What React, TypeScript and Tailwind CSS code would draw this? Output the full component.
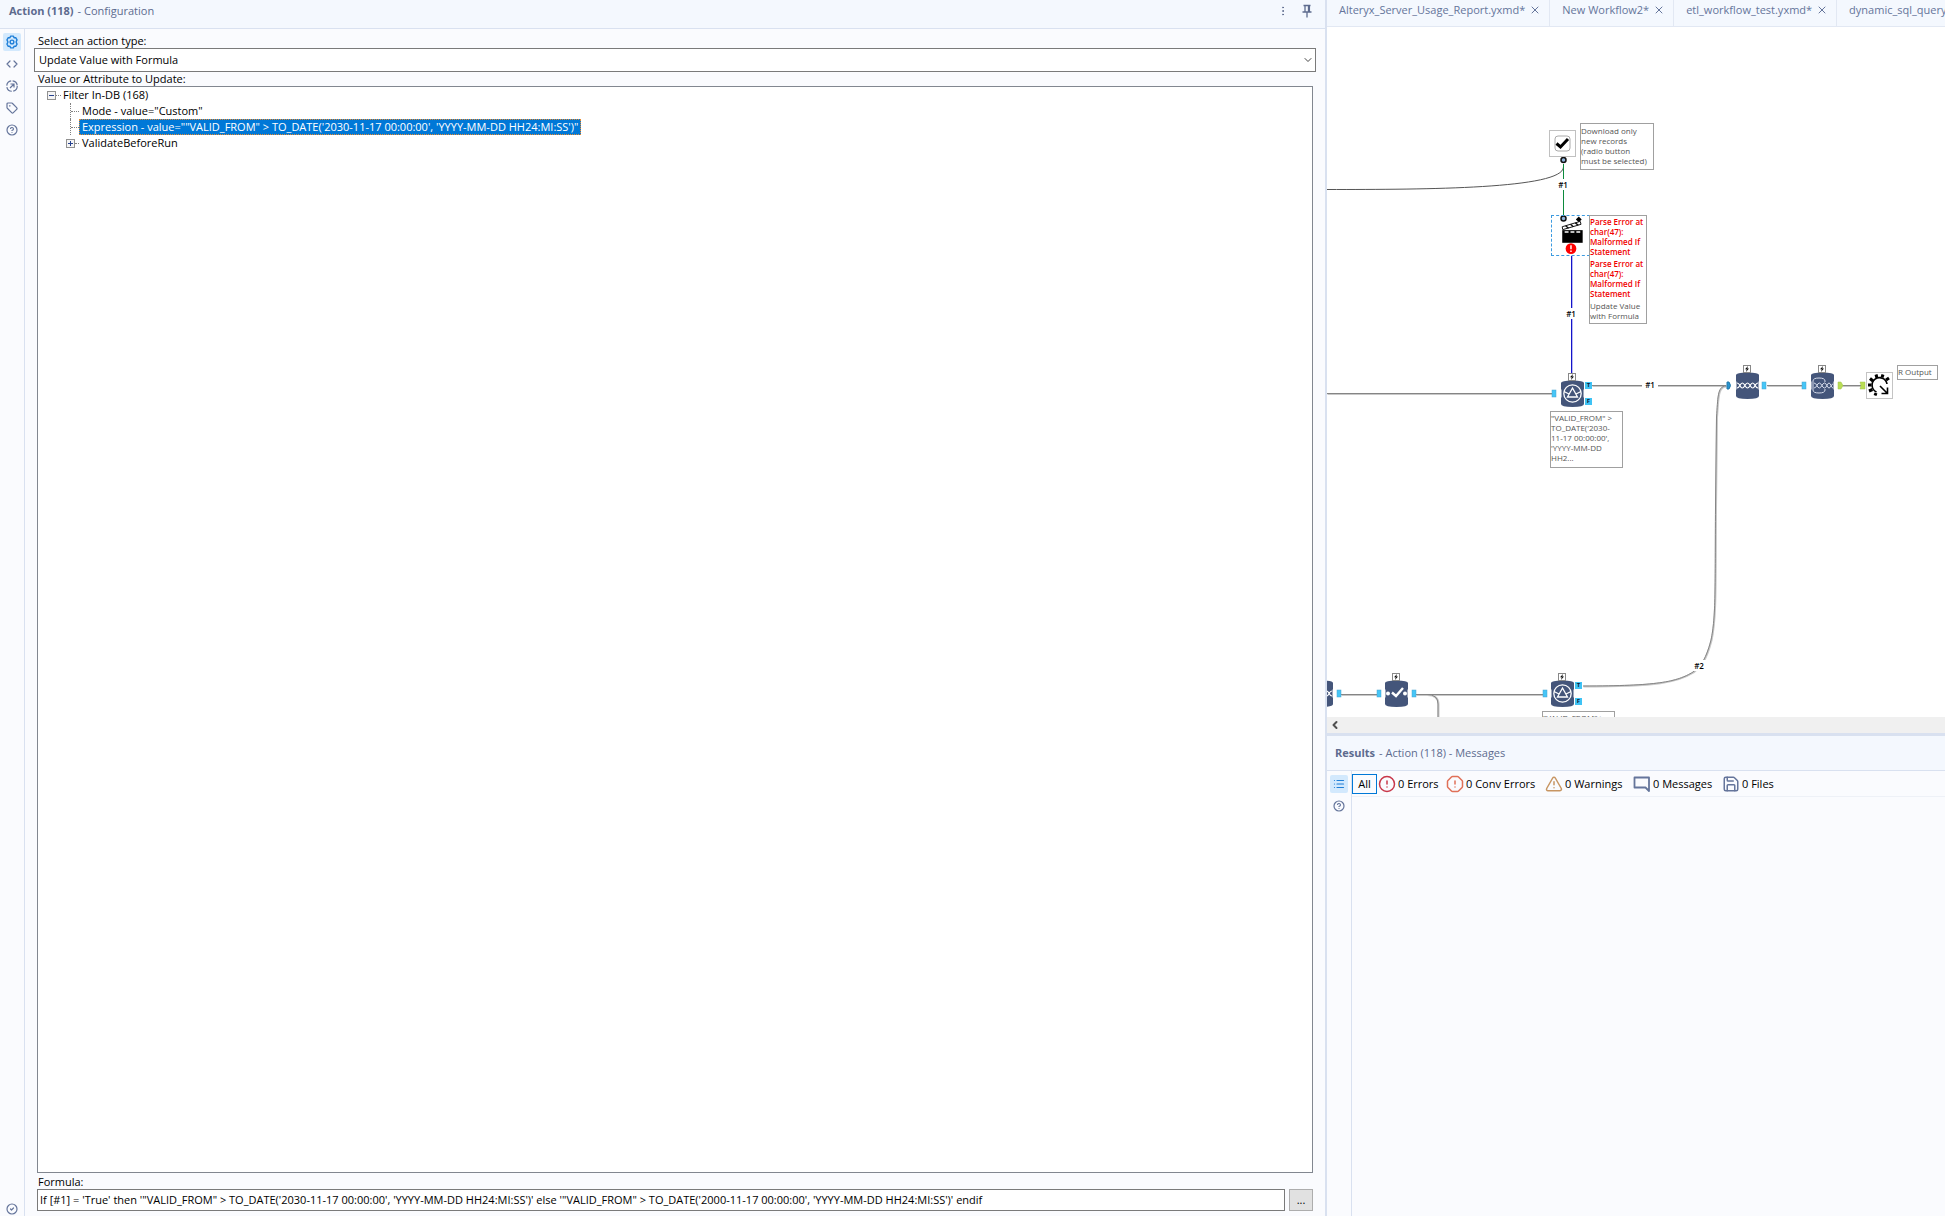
import React from "react";
import { Code, Tag, CircleHelp, CircleCheck, EllipsisVertical, X, List, ChevronDown, ChevronLeft, TriangleAlert, OctagonAlert, CircleAlert, Save } from "lucide-react";

const tabs = ["Alteryx_Server_Usage_Report.yxmd*", "New Workflow2*", "etl_workflow_test.yxmd*", "dynamic_sql_query"];

type Glyph = "filter" | "join" | "stream" | "select";

const dbTools: { x: number; y: number; glyph: Glyph; label: string }[] = [
  { x: 234, y: 346, glyph: "filter", label: "Filter In-DB" },
  { x: 409, y: 338, glyph: "join", label: "Union In-DB" },
  { x: 484, y: 338, glyph: "stream", label: "Data Stream Out" },
  { x: -17, y: 646, glyph: "join", label: "Connect In-DB" },
  { x: 58, y: 646, glyph: "select", label: "Select In-DB" },
  { x: 224, y: 646, glyph: "filter", label: "Filter In-DB" },
];

const blueAnchors = [
  [225, 363],
  [435, 355],
  [475, 355],
  [10, 663],
  [50, 663],
  [85, 663],
  [216, 663],
];

const branchAnchors = [
  { x: 258, y: 355, text: "T" },
  { x: 258, y: 371, text: "F" },
  { x: 248, y: 655, text: "T" },
  { x: 248, y: 671, text: "F" },
];

const wireLabels = [
  { x: 228, y: 152, text: "#1" },
  { x: 236, y: 281, text: "#1" },
  { x: 315, y: 352, text: "#1" },
  { x: 364, y: 633, text: "#2" },
];

const GearIcon: React.FC = () => (
  <svg viewBox="0 0 24 24" className="w-3.5 h-3.5" fill="none" stroke="currentColor" strokeWidth="2.4" strokeLinejoin="round" aria-hidden="true">
    <path d="M9.500 2h5l1 2.600 2.900-.1 2.200 3.900-1.600 3.600 1.600 3.600-2.200 3.900-2.900-.1-1 2.600h-5l-1-2.600-2.900.1-2.200-3.900L5 12 3.400 8.400l2.200-3.900 2.900.1z" />
    <circle cx="12" cy="12" r="3.200" />
  </svg>
);

const CircleArrowIcon: React.FC = () => (
  <svg viewBox="0 0 24 24" className="w-3 h-3" fill="none" stroke="currentColor" strokeWidth="2.4" aria-hidden="true">
    <circle cx="12" cy="12" r="10.500" strokeDasharray="13.500 3" />
    <path d="M8 16l7.500-7.500M9 8h7v7" />
  </svg>
);

const PinIcon: React.FC = () => (
  <svg viewBox="0 0 12 14" className="w-3 h-3.5" fill="none" stroke="currentColor" strokeWidth="1.300" aria-hidden="true">
    <path d="M2.500 1.500h7M4 1.500v6M7.500 1.500v6M8.400 1.500v6M1.500 8h9M6 8v5.500" />
  </svg>
);

const MessageIcon: React.FC = () => (
  <svg viewBox="0 0 18 18" className="w-[18px] h-[18px]" fill="none" stroke="currentColor" strokeWidth="1.800" strokeLinejoin="round" aria-hidden="true">
    <path d="M1.500 2.500h14.500v13.500l-3.500-3.500h-11z" />
  </svg>
);

const filters = [
  { label: "0 Errors", icon: <CircleAlert className="w-[18px] h-[18px] text-[#c8374a]" />, width: "w-[68px]" },
  { label: "0 Conv Errors", icon: <OctagonAlert className="w-[18px] h-[18px] text-[#e07058]" />, width: "w-[99px]" },
  { label: "0 Warnings", icon: <TriangleAlert className="w-[18px] h-[18px] text-[#c79562]" />, width: "w-[88px]" },
  { label: "0 Messages", icon: <MessageIcon />, width: "w-[89px]" },
  { label: "0 Files", icon: <Save className="w-[18px] h-[18px]" />, width: "w-[70px]" },
];

const TreeToggle: React.FC<{ open: boolean; label: string }> = ({ open, label }) => (
  <button type="button" aria-label={label} aria-expanded={open} className="w-[9px] h-[9px] shrink-0 border border-[#919191] bg-[#f4f4f4] text-[#26418f]">
    <svg viewBox="0 0 7 7" className="block w-[7px] h-[7px]" stroke="currentColor" aria-hidden="true">
      <path d={open ? "M1 3.500h5" : "M1 3.500h5M3.500 1v5"} />
    </svg>
  </button>
);

const DbTool: React.FC<{ glyph: Glyph }> = ({ glyph }) => (
  <svg viewBox="0 0 23 34" className="w-[23px] h-[34px]" fill="none" aria-hidden="true">
    <path d="M0 10Q0 7.500 11.500 7.500T23 10V16L22.500 17V24L23 25V31Q23 34 11.500 34T0 31V25L0.500 24V17L0 16Z" fill="#44557a" />
    <rect x="7.500" y="0.500" width="7" height="7" fill="#fff" stroke="#888" />
    <path d="M12 1L9 4.300h1.700L10 7l3-3.500h-1.700z" fill="#111" />
    {glyph === "filter" && (
      <g stroke="#fff" strokeWidth="1.300">
        <circle cx="11.500" cy="20.500" r="8.700" />
        <path d="M11.500 15L6.500 24h10zM3 18.500l5 2.500M15 21l5-2.500" />
      </g>
    )}
    {glyph === "join" && (
      <path
        d="M1 18C4 18 4 23 6.300 23S9.200 18 11.500 18 14.400 23 16.700 23 19 18 22 18M1 23C4 23 4 18 6.300 18S9.200 23 11.500 23 14.400 18 16.700 18 19 23 22 23"
        stroke="#fff"
        strokeWidth="1.200"
      />
    )}
    {glyph === "stream" && (
      <g stroke="#d5dbea" strokeWidth="1">
        <path d="M2 16q0-3 6-3t6 3v1M2 16v9q0 3 6 3t6-3v-1" />
        <path d="M3 18C6 18 6 23 8.300 23S11.200 18 13.500 18 16 23 18 23 20 19 22 19M3 23C6 23 6 18 8.300 18S11.200 23 13.500 23 16 18 18 18 20 23 22 23" />
      </g>
    )}
    {glyph === "select" && (
      <g>
        <circle cx="3" cy="20.500" r="2" fill="#fff" />
        <circle cx="20" cy="20.500" r="2" fill="#fff" />
        <path d="M7 19.500l4 3.500 7-8" stroke="#fff" strokeWidth="2.400" />
      </g>
    )}
  </svg>
);

const straightWires = "M0 366.500H225M265 358.500H399M440 358.500H476M515 358.500H534M14 667.500H50M89 667.500H216";
const unionWire = "M399 359C390 359 391 372 389.500 390L388.500 480C388 560 389 590 384 613C378 636 372 640 366 645C350 655 330 659 256 659";
const downWire = "M100 667.500Q111 667.500 111 677V690";

const Wires: React.FC = () => (
  <svg className="absolute left-0 top-0 w-[620px] h-[690px]" fill="none" aria-hidden="true">
    <path d="M0 162.500C100 162.500 236 162 236.500 140" stroke="#555" />
    <path d="M236.500 137V188" stroke="#0c8a3c" />
    <path d="M245.500 229V346" stroke="#b9b9f5" />
    <path d="M244.500 229V346" stroke="#1414c8" />
    <g stroke="#c8c8c8" strokeWidth="2" transform="translate(0.5 0.5)">
      <path d={straightWires} />
      <path d={unionWire} />
      <path d={downWire} />
    </g>
    <g stroke="#858585">
      <path d={straightWires} />
      <path d={unionWire} />
      <path d={downWire} />
    </g>
    {/* Connection points */}
    <g fill="#46c6f7" stroke="#4aa3cf" strokeWidth="0.500">
      {blueAnchors.map(([x, y]) => (
        <rect key={`${x}-${y}`} x={x} y={y} width="4" height="7" />
      ))}
    </g>
    <path d="M400 355h2q3 3.500 0 7h-2z" fill="#2795d0" stroke="#2478aa" />
    <path d="M511 355h3l2 3.500-2 3.500h-3zM533 355h5v7h-5l1-3.500z" fill="#b9dd55" stroke="#9cc04a" strokeWidth="0.500" />
    {/* Question anchors */}
    <g stroke="#111" strokeWidth="1.500" fill="#8fb4dc">
      <circle cx="236.500" cy="133" r="2.500" />
      <circle cx="236.500" cy="191.500" r="2.500" />
    </g>
  </svg>
);

const note = "absolute border border-[#a0a0a0] bg-white text-[8px] leading-[10px] text-[#555] whitespace-nowrap";

const WorkflowCanvas: React.FC = () => (
  <main className="relative flex-1 min-h-0 overflow-hidden bg-white" aria-label="Workflow canvas">
    <Wires />

    {wireLabels.map((l) => (
      <span key={`${l.x}-${l.y}`} className="absolute w-4 bg-white text-center text-[8px] leading-[11px] font-semibold text-black" style={{ left: l.x, top: l.y }}>
        {l.text}
      </span>
    ))}

    {branchAnchors.map((a) => (
      <span key={`${a.x}-${a.y}`} className="absolute w-[7px] h-[7px] bg-[#3fc3f5] text-center text-[6px] leading-[7px] font-bold text-[#123]" style={{ left: a.x, top: a.y }}>
        {a.text}
      </span>
    ))}

    {dbTools.map((t) => (
      <div key={`${t.x}-${t.y}`} role="img" aria-label={t.label} className="absolute" style={{ left: t.x, top: t.y }}>
        <DbTool glyph={t.glyph} />
      </div>
    ))}

    {/* Check box tool */}
    <div className="absolute left-[222px] top-[103px]">
      <svg viewBox="0 0 27 27" className="w-[27px] h-[27px]" aria-hidden="true">
        <rect x="0.500" y="0.500" width="26" height="26" fill="#fff" stroke="#c0c0c0" />
        <rect x="6" y="6" width="15" height="15" rx="3" fill="#fff" stroke="#aaa" />
        <path d="M7.500 13.500l4 3.500 7.500-8" fill="none" stroke="#000" strokeWidth="3" />
      </svg>
    </div>
    <p className={`${note} left-[253px] top-[96px] w-[74px] h-[47px] pt-[2px]`}>
      Download only
      <br />
      new records
      <br />
      (radio button
      <br />
      must be selected)
    </p>

    {/* Action tool */}
    <div className="absolute left-[224px] top-[188px] w-[39px] h-[41px] border border-dashed border-[#3d9be0]">
      <svg viewBox="0 0 38 40" className="w-[37px] h-[39px]" fill="none" aria-hidden="true">
        <path d="M27.500 0.500l3 3-3 3-3-3z" fill="#000" />
        <path d="M10.500 11L29 5.500l.8 3L11 14z" fill="#fff" stroke="#111" />
        <path d="M14 10l3 2.500M19 8.500l3 2.500M24 7l3 2.500" stroke="#111" strokeWidth="1.500" />
        <path d="M10.500 14.500h21V27.500h-21z" fill="#000" />
        <path d="M13 16.500h4M19 16.500h4M25 16.500h4" stroke="#fff" strokeWidth="1.500" />
        <circle cx="19.500" cy="33.500" r="5.500" fill="#f00" />
        <path d="M19.500 30v4M19.500 35.500v1.500" stroke="#fff" strokeWidth="1.500" />
      </svg>
    </div>
    <div className={`${note} left-[262px] top-[188px] w-[58px] h-[109px] pt-px`}>
      <p className="font-semibold text-[#f00000]">
        Parse Error at
        <br />
        char(47):
        <br />
        Malformed If
        <br />
        Statement
      </p>
      <p className="mt-[2px] font-semibold text-[#f00000]">
        Parse Error at
        <br />
        char(47):
        <br />
        Malformed If
        <br />
        Statement
      </p>
      <p className="mt-[2px]">
        Update Value
        <br />
        with Formula
      </p>
    </div>

    <p className={`${note} left-[223px] top-[384px] w-[73px] h-[57px] pt-px`}>
      "VALID_FROM" &gt;
      <br />
      TO_DATE('2030-
      <br />
      11-17 00:00:00',
      <br />
      'YYYY-MM-DD
      <br />
      HH2...
    </p>
    <p className={`${note} left-[215px] top-[684px] w-[73px] h-[57px] pt-px`}>"VALID_FROM" &gt;</p>

    {/* Macro output */}
    <div className="absolute left-[539px] top-[345px]">
      <svg viewBox="0 0 27 27" className="w-[27px] h-[27px]" fill="none" aria-hidden="true">
        <rect x="0.500" y="0.500" width="26" height="26" fill="#fff" stroke="#c4c4c4" />
        <path d="M10.500 20A7.500 7.500 0 1 1 21 12" stroke="#000" strokeWidth="1.600" />
        <path d="M10 21l-1 2.500M6.500 17.500L3 19M5.500 13H2M7 9L4 6.500M11 6l-1-3.500M16 5.500l1-3M20 8l3-2" stroke="#000" strokeWidth="3" />
        <path d="M14 14l7 7M21.500 15.500v6h-6" stroke="#000" strokeWidth="1.600" />
      </svg>
    </div>
    <p className={`${note} left-[570px] top-[338px] w-[41px] h-[15px] pt-px`}>R Output</p>
  </main>
);

const ConfigurationPanel: React.FC = () => (
  <section className="flex flex-col flex-1 min-w-0" aria-label="Configuration">
    <header className="flex items-center h-[29px] pl-[9px] pr-3 pb-[6px] border-b border-[#d9e1f0] bg-[#f4f8fe] text-[#5d6b8e]">
      <h1 className="flex-1 whitespace-nowrap">
        <b className="font-bold">Action (118)</b>
        <span className="ml-1">- Configuration</span>
      </h1>
      <button type="button" aria-label="More options" className="mr-[12px]">
        <EllipsisVertical className="w-3 h-3" />
      </button>
      <button type="button" aria-label="Pin panel">
        <PinIcon />
      </button>
    </header>

    <div className="flex flex-1 min-h-0">
      <nav className="flex flex-col items-center w-[25px] shrink-0 pt-1 border-r border-[#d9e1f0] text-[#65759b]" aria-label="Configuration views">
        <button type="button" aria-label="Configuration" className="flex items-center justify-center w-[18px] h-[18px] rounded-xs bg-[#d3e9fd] text-[#1f7fd8]">
          <GearIcon />
        </button>
        <button type="button" aria-label="XML view" className="mt-[7px]">
          <Code className="w-3 h-3" strokeWidth={2.4} />
        </button>
        <button type="button" aria-label="Navigation" className="mt-[10px]">
          <CircleArrowIcon />
        </button>
        <button type="button" aria-label="Annotation" className="mt-[10px]">
          <Tag className="w-3 h-3" strokeWidth={2.4} />
        </button>
        <button type="button" aria-label="Help" className="mt-[10px]">
          <CircleHelp className="w-3 h-3" strokeWidth={2.4} />
        </button>
        <button type="button" aria-label="Status" className="mt-auto mb-[1px]">
          <CircleCheck className="w-3 h-3" strokeWidth={2.4} />
        </button>
      </nav>

      <form className="flex flex-col flex-1 min-w-0 pl-[9px] pr-[9px] pt-1 text-black">
        <label htmlFor="action-type" className="pl-1 leading-[15px]">
          Select an action type:
        </label>
        <div className="relative h-[24px]">
          <select id="action-type" className="w-full h-full appearance-none rounded-none border border-[#7a7a7a] bg-white pl-1">
            <option>Update Value with Formula</option>
          </select>
          <ChevronDown className="absolute right-[2px] top-[6px] w-3 h-3 pointer-events-none text-[#444]" />
        </div>
        <h2 className="pl-1 leading-[14px]">Value or Attribute to Update:</h2>

        <div className="flex flex-col flex-1 min-h-0 ml-[3px] mr-[3px]">
          <ul className="flex-1 min-h-0 overflow-hidden border border-[#828790] bg-white leading-4 whitespace-nowrap">
            <li>
              <div className="flex items-center h-4 pl-[9px]">
                <TreeToggle open label="Collapse Filter In-DB" />
                <span className="w-[5px] border-t border-dotted border-[#808080]" />
                <span className="pl-[2px]">Filter In-DB (168)</span>
              </div>
              <ul>
                <li className="flex items-center h-4 pl-[32px]">
                  <span className="h-4 border-l border-dotted border-[#808080]" />
                  <span className="w-2 border-t border-dotted border-[#808080]" />
                  <span className="px-[3px]">Mode - value="Custom"</span>
                </li>
                <li className="flex items-center h-4 pl-[32px]">
                  <span className="h-4 border-l border-dotted border-[#808080]" />
                  <span className="w-2 border-t border-dotted border-[#808080]" />
                  <span className="h-4 border border-dotted border-[#e98a2e] bg-[#0078d7] px-[2px] leading-[14px] text-white">
                    Expression - value=""VALID_FROM" &gt; TO_DATE('2030-11-17 00:00:00', 'YYYY-MM-DD HH24:MI:SS')"
                  </span>
                </li>
                <li className="flex items-center h-4 pl-[28px]">
                  <TreeToggle open={false} label="Expand ValidateBeforeRun" />
                  <span className="w-1 border-t border-dotted border-[#808080]" />
                  <span className="px-[3px]">ValidateBeforeRun</span>
                </li>
              </ul>
            </li>
          </ul>

          <label htmlFor="formula" className="pl-px pt-[2px] leading-[14px]">
            Formula:
          </label>
          <div className="flex gap-1 h-[22px] mb-[5px]">
            <input
              id="formula"
              type="text"
              className="flex-1 min-w-0 border border-[#7a7a7a] bg-white px-[2px]"
              defaultValue={`If [#1] = 'True' then '"VALID_FROM" > TO_DATE('2030-11-17 00:00:00', 'YYYY-MM-DD HH24:MI:SS')' else '"VALID_FROM" > TO_DATE('2000-11-17 00:00:00', 'YYYY-MM-DD HH24:MI:SS')' endif`}
            />
            <button type="button" aria-label="Browse formula" className="w-6 border border-[#adadad] bg-[#e1e1e1]">
              ...
            </button>
          </div>
        </div>
      </form>
    </div>
  </section>
);

const ResultsPanel: React.FC = () => (
  <section className="flex flex-col h-[480px] shrink-0" aria-label="Results">
    <header className="flex items-center h-[35px] pl-[8px] border-b border-[#d9e1f0] bg-[#f4f8fe] text-[#5d6b8e]">
      <h2 className="whitespace-nowrap">
        <b className="font-bold">Results</b>
        <span className="ml-1">- Action (118) - Messages</span>
      </h2>
    </header>
    <div className="flex flex-1 min-h-0">
      <nav className="flex flex-col items-center w-[25px] shrink-0 pt-1 border-r border-[#d9e1f0] text-[#65759b]" aria-label="Result views">
        <button type="button" aria-label="Messages" className="flex items-center justify-center w-[18px] h-[18px] rounded-xs bg-[#d3e9fd] text-[#1f7fd8]">
          <List className="w-3 h-3" strokeWidth={2.4} />
        </button>
        <button type="button" aria-label="Help" className="mt-[7px]">
          <CircleHelp className="w-3 h-3" strokeWidth={2.4} />
        </button>
      </nav>
      <div className="flex-1 min-w-0">
        <div className="flex items-center h-[26px] border-b border-[#eef1f7] whitespace-nowrap text-black">
          <button type="button" className="w-[25px] h-5 mr-px border border-[#0078d7]">
            All
          </button>
          {filters.map((f) => (
            <button key={f.label} type="button" className={`flex items-center gap-[2px] shrink-0 text-left ${f.width}`}>
              <span className="text-[#65759b]">{f.icon}</span>
              {f.label}
            </button>
          ))}
        </div>
      </div>
    </div>
  </section>
);

export default function App() {
  return (
    <div className="flex h-screen overflow-hidden bg-[#fafbfe] font-['Open_Sans','Noto_Sans',sans-serif] text-[11px] leading-4">
      <ConfigurationPanel />

      <div className="flex flex-col w-[620px] shrink-0 border-l-2 border-[#d9e1f0]">
        <div role="tablist" className="flex h-[27px] shrink-0 overflow-hidden border-b border-[#e2e8f3] bg-[#f4f8fe] text-[#65759b]">
          {tabs.map((name) => (
            <div key={name} className="flex items-start shrink-0 gap-1 pl-3 pr-2 pt-[2px] border-r border-[#e2e8f3]">
              <button type="button" role="tab" className="whitespace-nowrap">
                {name}
              </button>
              <button type="button" aria-label={`Close ${name}`} className="mt-[2px]">
                <X className="w-3 h-3" />
              </button>
            </div>
          ))}
        </div>

        <WorkflowCanvas />

        <div className="flex items-center h-4 shrink-0 bg-[#f0f0f0] pl-[2px]">
          <button type="button" aria-label="Scroll left">
            <ChevronLeft className="w-3 h-3 text-[#505050]" strokeWidth={4} />
          </button>
        </div>
        <div className="h-[3px] shrink-0 bg-[#d9e1f0]" />
        <ResultsPanel />
      </div>
    </div>
  );
}
